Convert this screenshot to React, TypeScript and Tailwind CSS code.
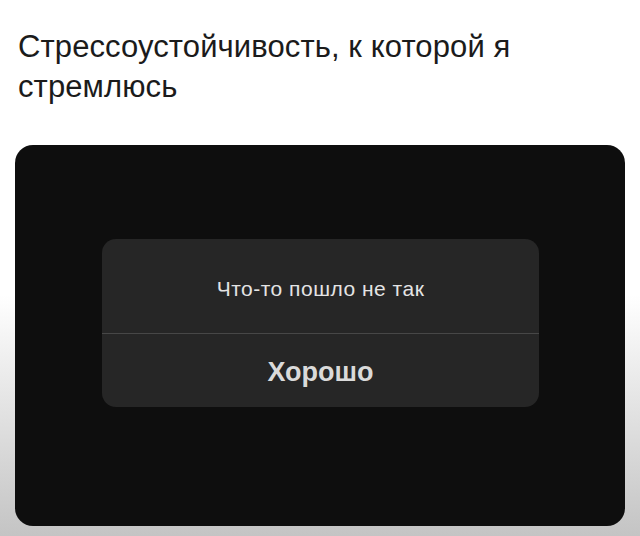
export default function App() {
  return (
    <div className="h-[536px] w-full overflow-hidden bg-linear-to-b from-white from-55% to-[#c4c4c4] font-['Liberation_Sans',Arial,sans-serif]">
      <h1 className="pl-[18px] pr-6 pt-[27px] text-[31px] leading-[40px] text-[#1b1b1b] font-normal tracking-[0.1px]">
        Стрессоустойчивость, к которой я стремлюсь
      </h1>
      <div className="mx-[15px] mt-[38px] h-[381px] rounded-[18px] bg-[#0e0e0e] pt-[94px] pl-[87px]">
        <div className="w-[437px] overflow-hidden rounded-[14px] bg-[#262626]">
          <div className="flex h-[95px] items-center justify-center border-b border-[#474747] pt-[6px] text-[21px] tracking-[0.5px] text-[#e4e4e4]">
            Что-то пошло не так
          </div>
          <div className="flex h-[73px] items-center justify-center pt-[4px] text-[27px] font-bold text-[#dadada]">
            Хорошо
          </div>
        </div>
      </div>
    </div>
  );
}
